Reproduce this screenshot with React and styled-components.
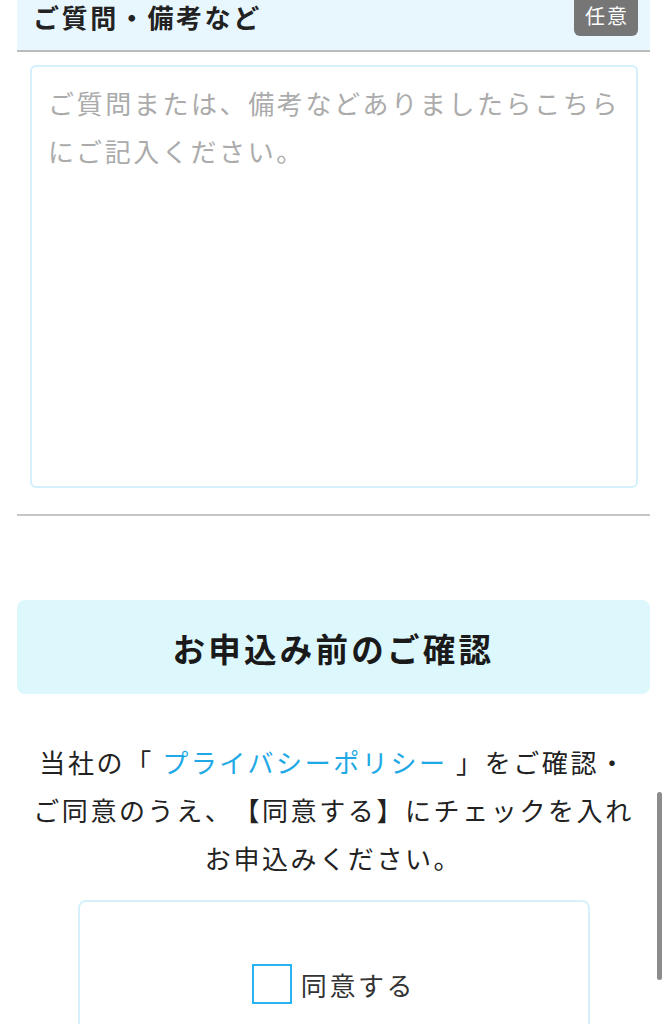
import React from "react";
import styled, { createGlobalStyle } from "styled-components";

const GlobalStyle = createGlobalStyle`
    html, body {
        margin: 0;
        padding: 0;
        background: #fff;
        overflow: hidden;
    }
    body {
        font-family: "Noto Sans CJK JP", "Noto Sans", sans-serif;
        color: #222;
        text-spacing-trim: space-all;
    }
`;

const Page = styled.div`
    padding: 0 17px;
`;

const FieldSection = styled.section`
    padding-bottom: 26px;
    border-bottom: 2px solid #c6c6c6;
`;

const FieldHeader = styled.div`
    display: flex;
    justify-content: space-between;
    align-items: flex-start;
    height: 50px;
    background: #e8f7fe;
    border-bottom: 2px solid #bcbcbc;
`;

const FieldTitle = styled.h3`
    margin: 0;
    padding-left: 16px;
    font-size: 26px;
    font-weight: 700;
    line-height: 33px;
    letter-spacing: 0.1em;
    color: #222;
`;

const Badge = styled.span`
    width: 64px;
    height: 36px;
    margin-right: 12px;
    border-radius: 0 0 6px 6px;
    background: #767676;
    color: #fff;
    font-size: 20px;
    line-height: 32px;
    letter-spacing: 0.1em;
    text-align: center;
    text-indent: 0.1em;
`;

const FieldBody = styled.div`
    padding: 13px 12px 0 13px;
`;

const TextArea = styled.textarea`
    display: block;
    width: 100%;
    height: 423px;
    box-sizing: border-box;
    margin: 0;
    padding: 12px 6px 12px 16px;
    border: 2px solid #d3f0fc;
    border-radius: 6px;
    resize: none;
    font-family: inherit;
    font-size: 26px;
    line-height: 48px;
    letter-spacing: 0.1em;
    color: #222;
    outline: none;

    &::placeholder {
        color: #ababab;
    }
`;

const ConfirmHeading = styled.h2`
    margin: 84px 0 0;
    height: 94px;
    display: flex;
    align-items: center;
    justify-content: center;
    border-radius: 8px;
    background: #dcf8fd;
    font-size: 32.5px;
    font-weight: 700;
    letter-spacing: 0.1em;
    color: #1a1a1a;
`;

const Notice = styled.p`
    margin: 44px -10px 0;
    font-size: 26px;
    line-height: 48px;
    letter-spacing: 0.1em;
    text-align: center;
    color: #222;
`;

const PolicyLink = styled.a`
    color: #1ea9e6;
    text-decoration: none;
`;

const AgreeBox = styled.div`
    width: 512px;
    margin: 18px auto 0;
    padding: 62px 0 60px;
    box-sizing: border-box;
    border: 2px solid #d5f1fc;
    border-radius: 8px;
    display: flex;
    justify-content: center;
`;

const AgreeLabel = styled.label`
    display: flex;
    align-items: center;
    gap: 9px;
    font-size: 26px;
    letter-spacing: 0.1em;
    color: #333;
    cursor: pointer;
`;

const CheckBox = styled.span`
    width: 40px;
    height: 40px;
    box-sizing: border-box;
    border: 2px solid #2ab4ef;
    background: #fff;
`;

const ScrollThumb = styled.div`
    position: fixed;
    top: 792px;
    right: 5px;
    width: 5px;
    height: 188px;
    border-radius: 3px;
    background: #8c8c8c;
`;

const App = () => {
    return (
        <>
            <GlobalStyle />
            <Page>
                <FieldSection>
                    <FieldHeader>
                        <FieldTitle>ご質問・備考など</FieldTitle>
                        <Badge>任意</Badge>
                    </FieldHeader>
                    <FieldBody>
                        <TextArea
                            placeholder={"ご質問または、備考などありましたらこちら\nにご記入ください。"}
                        />
                    </FieldBody>
                </FieldSection>

                <ConfirmHeading>お申込み前のご確認</ConfirmHeading>

                <Notice>
                    当社の「 <PolicyLink href="#">プライバシーポリシー</PolicyLink> 」をご確認・
                    <br />
                    ご同意のうえ、【同意する】にチェックを入れ
                    <br />
                    お申込みください。
                </Notice>

                <AgreeBox>
                    <AgreeLabel>
                        <CheckBox />
                        同意する
                    </AgreeLabel>
                </AgreeBox>
            </Page>
            <ScrollThumb />
        </>
    );
};

export default App;
